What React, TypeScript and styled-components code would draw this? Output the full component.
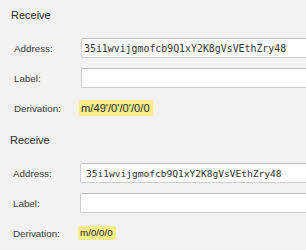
import React from "react";
import styled, { createGlobalStyle } from "styled-components";

const Global = createGlobalStyle`
  html, body { margin: 0; padding: 0; background: #f2f2f2; }
  body { font-family: "Liberation Sans", Arial, sans-serif; width: 306px; height: 250px; overflow: hidden; }
`;

const Page = styled.div`
  display: flex;
  flex-direction: column;
  width: 306px;
`;

const Section = styled.section<{ $inset: number }>`
  display: flex;
  flex-direction: column;
  gap: 16px;
  padding: 8px 0 7px ${(p) => p.$inset}px;
`;

const Title = styled.h2`
  margin: 0;
  font-size: 11px;
  line-height: 14px;
  font-weight: 400;
  color: #2e2e2e;
`;

const Form = styled.div`
  display: grid;
  grid-template-columns: 67px 1fr;
  grid-auto-rows: 20px;
  row-gap: 10px;
  align-items: center;
  padding-left: 3px;
`;

const Label = styled.span`
  font-size: 9.8px;
  color: #3c3c3c;
`;

const Field = styled.div<{ $size: number }>`
  height: 20px;
  box-sizing: border-box;
  background: #fff;
  border: 1px solid #cfcfcf;
  border-top-color: #bdbdbd;
  border-right: none;
  border-radius: 2px 0 0 2px;
  display: flex;
  align-items: center;
  padding-left: ${(p) => (p.$size > 9.7 ? 2 : 5)}px;
  font-family: "DejaVu Sans Mono", "Liberation Mono", monospace;
  font-size: ${(p) => p.$size}px;
  color: #333;
  white-space: nowrap;
  overflow: hidden;
`;

const Path = styled.span<{ $size: number }>`
  justify-self: start;
  margin-left: -2px;
  background: #f6ec8c;
  border-radius: 2px;
  padding: 0 3px 0 2px;
  font-size: ${(p) => p.$size}px;
  line-height: ${(p) => (p.$size > 10.5 ? 16 : 14)}px;
  color: #2a2a2a;
`;

type Props = { inset: number; mono: number; path: string; pathSize: number };

const Receive = ({ inset, mono, path, pathSize }: Props) => (
  <Section $inset={inset}>
    <Title>Receive</Title>
    <Form>
      <Label>Address:</Label>
      <Field $size={mono}>35i1wvijgmofcb9Q1xY2K8gVsVEthZry48</Field>
      <Label>Label:</Label>
      <Field $size={mono} />
      <Label>Derivation:</Label>
      <Path $size={pathSize}>{path}</Path>
    </Form>
  </Section>
);

export default function App() {
  return (
    <Page>
      <Global />
      <Receive inset={11} mono={9.9} path="m/49'/0'/0'/0/0" pathSize={11.2} />
      <Receive inset={10} mono={9.55} path="m/0/0/0" pathSize={9.8} />
    </Page>
  );
}
